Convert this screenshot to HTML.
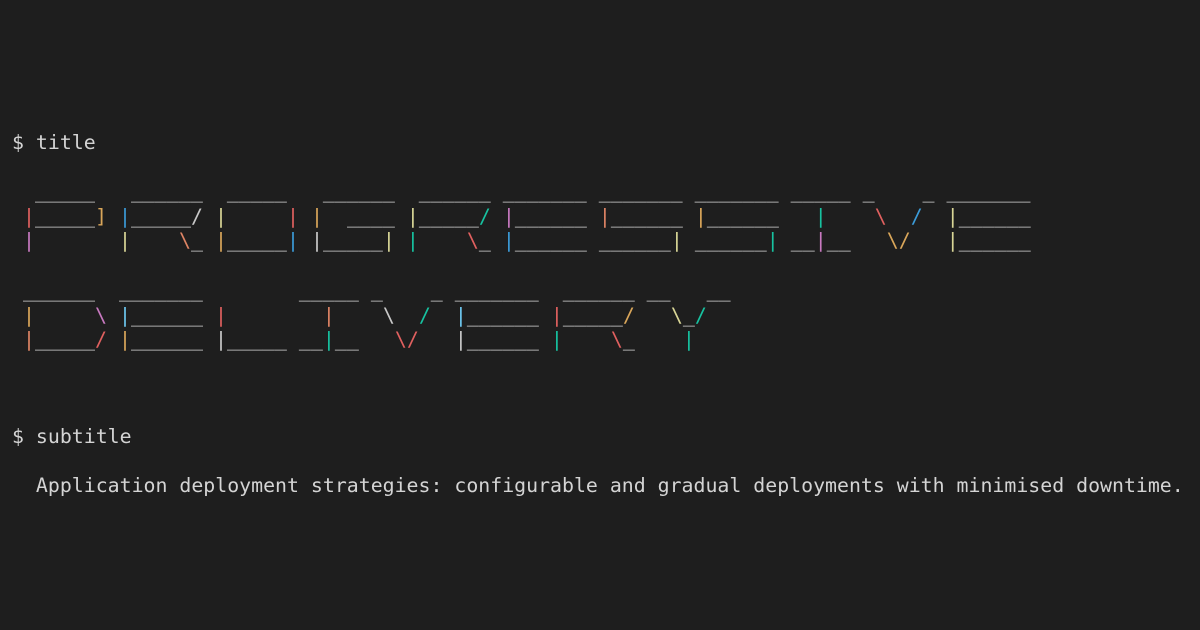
<!DOCTYPE html>
<html><head><meta charset="utf-8">
<style>
html,body{margin:0;padding:0;}
body{width:1200px;height:630px;background:#1e1e1e;position:relative;overflow:hidden;color:#d4d4d4;}
.t{position:absolute;left:12px;margin:0;font-family:"DejaVu Sans Mono","Liberation Mono",monospace;font-size:19.88px;line-height:24px;white-space:pre;color:#d4d4d4;}
.a{position:absolute;left:11px;margin:0;font-family:"DejaVu Sans Mono","Liberation Mono",monospace;font-size:19.93px;line-height:24.7px;white-space:pre;color:#d2d2d2;}
.r{color:#e0605f}.g{color:#d9a65a}.py{color:#d8d596}.b{color:#3b9bd8}.lb{color:#6cc6ee}
.t2{color:#17c2a0}.p{color:#c879c0}.s{color:#de8464}.w{color:#c8c8c8}
</style></head><body>
<pre class="t" style="top:131px">$ title</pre>
<pre class="a" style="top:180px">  _____   ______  _____   ______  ______ _______ _______ _______ _____ _    _ _______
 <span class="r">|</span>_____<span class="g">]</span> <span class="b">|</span>_____<span class="w">/</span> <span class="py">|</span>     <span class="r">|</span> <span class="g">|</span>  ____ <span class="py">|</span>_____<span class="t2">/</span> <span class="p">|</span>______ <span class="s">|</span>______ <span class="g">|</span>______   <span class="t2">|</span>    <span class="r">\</span>  <span class="b">/</span>  <span class="py">|</span>______
 <span class="p">|</span>       <span class="py">|</span>    <span class="s">\</span>_ <span class="g">|</span>_____<span class="b">|</span> <span class="w">|</span>_____<span class="py">|</span> <span class="t2">|</span>    <span class="r">\</span>_ <span class="b">|</span>______ ______<span class="py">|</span> ______<span class="t2">|</span> __<span class="p">|</span>__   <span class="g">\/</span>   <span class="py">|</span>______</pre>
<pre class="a" style="top:279px"> ______  _______        _____ _    _ _______  ______ __   __
 <span class="g">|</span>     <span class="p">\</span> <span class="lb">|</span>______ <span class="r">|</span>        <span class="s">|</span>    <span class="w">\</span>  <span class="t2">/</span>  <span class="lb">|</span>______ <span class="r">|</span>_____<span class="g">/</span>   <span class="py">\</span>_<span class="t2">/</span>
 <span class="s">|</span>_____<span class="r">/</span> <span class="g">|</span>______ <span class="w">|</span>_____ __<span class="t2">|</span>__   <span class="r">\/</span>   <span class="w">|</span>______ <span class="t2">|</span>    <span class="r">\</span>_    <span class="t2">|</span></pre>
<pre class="t" style="top:425px">$ subtitle</pre>
<pre class="t" style="top:474px">  Application deployment strategies: configurable and gradual deployments with minimised downtime.</pre>
</body></html>
